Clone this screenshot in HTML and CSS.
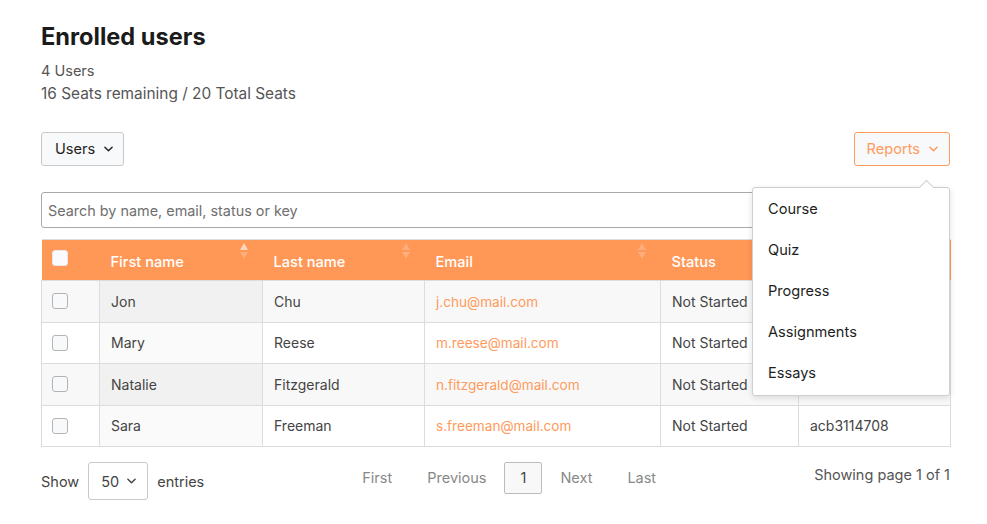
FILE: index.html
```html
<!DOCTYPE html>
<html lang="en">
<head>
<meta charset="utf-8">
<title>Enrolled users</title>
<link rel="stylesheet" href="styles.css">
</head>
<body>
<main class="page">
  <h1 class="title">Enrolled users</h1>
  <p class="meta">4 Users</p>
  <p class="meta meta-seats">16 Seats remaining / 20 Total Seats</p>

  <div class="toolbar">
    <button class="btn btn-users">Users <svg class="chev" viewBox="0 0 10 6"><path d="M1 1l4 4 4-4"/></svg></button>
    <div class="reports">
      <button class="btn btn-orange">Reports <svg class="chev" viewBox="0 0 10 6"><path d="M1 1l4 4 4-4"/></svg></button>
      <div class="menu">
        <span class="menu-arrow"></span>
        <div class="menu-item">Course</div>
        <div class="menu-item">Quiz</div>
        <div class="menu-item">Progress</div>
        <div class="menu-item">Assignments</div>
        <div class="menu-item">Essays</div>
      </div>
    </div>
  </div>

  <div class="search"><span class="placeholder">Search by name, email, status or key</span></div>

  <table class="grid">
    <colgroup>
      <col class="c-cb"><col class="c-first"><col class="c-last"><col class="c-email"><col class="c-status"><col class="c-key">
    </colgroup>
    <thead>
      <tr>
        <th><span class="cb cb-head"></span></th>
        <th>First name<span class="sort sort-up"></span></th>
        <th>Last name<span class="sort"></span></th>
        <th>Email<span class="sort"></span></th>
        <th>Status</th>
        <th></th>
      </tr>
    </thead>
    <tbody>
      <tr class="odd"><td><span class="cb"></span></td><td class="sorted">Jon</td><td>Chu</td><td><a class="mail">j.chu@mail.com</a></td><td>Not Started</td><td></td></tr>
      <tr><td><span class="cb"></span></td><td class="sorted">Mary</td><td>Reese</td><td><a class="mail">m.reese@mail.com</a></td><td>Not Started</td><td></td></tr>
      <tr class="odd"><td><span class="cb"></span></td><td class="sorted">Natalie</td><td>Fitzgerald</td><td><a class="mail">n.fitzgerald@mail.com</a></td><td>Not Started</td><td></td></tr>
      <tr><td><span class="cb"></span></td><td class="sorted">Sara</td><td>Freeman</td><td><a class="mail">s.freeman@mail.com</a></td><td>Not Started</td><td>acb3114708</td></tr>
    </tbody>
  </table>

  <div class="footer">
    <div class="show">
      <span>Show</span>
      <span class="select">50 <svg class="chev" viewBox="0 0 10 6"><path d="M1 1l4 4 4-4"/></svg></span>
      <span>entries</span>
    </div>
    <nav class="pager">
      <span class="pg">First</span>
      <span class="pg">Previous</span>
      <span class="pg-current">1</span>
      <span class="pg">Next</span>
      <span class="pg">Last</span>
    </nav>
    <div class="showing">Showing page 1 of 1</div>
  </div>
</main>
</body>
</html>
```
FILE: styles.css
```css
* { box-sizing: border-box; }
html, body { margin: 0; padding: 0; background: #fff; }
body {
  font-family: Inter, "Noto Sans", "Liberation Sans", sans-serif;
  color: #222;
}
.page {
  width: 909px;
  margin-left: 41px;
  padding-top: 21px;
}
.title {
  margin: 0;
  font-size: 23.6px;
  line-height: 32px;
  font-weight: 700;
  color: #1b1b1b;
}
.meta {
  margin: 8px 0 0;
  font-size: 14.5px;
  line-height: 20px;
  color: #555;
}
.meta-seats { margin-top: 2px; font-size: 15.4px; line-height: 22px; }

.toolbar {
  display: flex;
  justify-content: space-between;
  align-items: flex-start;
  margin-top: 27px;
}
.btn {
  display: inline-flex;
  align-items: center;
  height: 34px;
  font-family: inherit;
  font-size: 14.6px;
  color: #222;
  background: #f8f9fa;
  border: 1px solid #c9c9c9;
  border-radius: 3px;
}
.btn-users { gap: 9px; padding: 0 10px 0 13px; }
.btn-orange {
  gap: 9px;
  padding: 0 11px 0 12px;
  color: #ff9a5c;
  border-color: #ff9a5c;
}
.chev {
  width: 9px;
  height: 6px;
  fill: none;
  stroke: currentColor;
  stroke-width: 1.6;
  stroke-linecap: round;
  stroke-linejoin: round;
}
.reports { position: relative; }
.menu {
  position: absolute;
  top: 55px;
  right: 0;
  width: 198px;
  padding: 1px 0;
  background: #fff;
  border: 1px solid #cfcfcf;
  border-radius: 3px;
  box-shadow: 0 2px 6px rgba(0,0,0,0.12);
  z-index: 5;
}
.menu-arrow {
  position: absolute;
  top: -6px;
  right: 17px;
  width: 11px;
  height: 11px;
  background: #fff;
  border-top: 1px solid #cfcfcf;
  border-left: 1px solid #cfcfcf;
  transform: rotate(45deg);
}
.menu-item {
  height: 41px;
  line-height: 41px;
  padding-left: 15px;
  font-size: 14.6px;
  color: #1e1e1e;
}

.search {
  margin-top: 26px;
  height: 36px;
  border: 1px solid #a9a9a9;
  border-radius: 3px;
  padding-left: 6px;
  display: flex;
  align-items: center;
}
.placeholder { font-size: 14.4px; color: #6f6f6f; }

.grid {
  margin-top: 11px;
  width: 909px;
  border-collapse: collapse;
  table-layout: fixed;
  font-size: 14px;
  border-top: 1px solid #ddd;
}
.c-cb { width: 58px; }
.c-first { width: 163px; }
.c-last { width: 162px; }
.c-email { width: 236px; }
.c-status { width: 138px; }
.c-key { width: 152px; }
.grid th {
  position: relative;
  height: 41px;
  padding: 3px 11px 0;
  text-align: left;
  font-size: 14.6px;
  font-weight: 500;
  color: #fff;
  background: #ff9857;
}
.grid td {
  height: 41.5px;
  padding: 0 11px;
  color: #444;
  border: 1px solid #dcdcdc;
  white-space: nowrap;
  overflow: hidden;
}
.grid tr.odd td { background: #f8f8f8; }
.grid tr.odd td.sorted { background: #f1f1f1; }
.grid tr td.sorted { background: #fafafa; }
.grid td:first-child, .grid th:first-child { padding-left: 10px; }
.mail { color: #ff9a5c; text-decoration: none; font-size: 13.6px; }
.cb {
  display: block;
  width: 16px;
  height: 16px;
  border: 1px solid #b4b4b4;
  border-radius: 3px;
  background: #f8f9fa;
}
.cb-head { margin-top: -8px; border-color: #e8e8e8; background: #fbfbfd; }
.sort {
  position: absolute;
  top: 3px;
  right: 15px;
  width: 8px;
  height: 16px;
}
.sort::before, .sort::after {
  content: "";
  position: absolute;
  left: 0;
  border-left: 4px solid transparent;
  border-right: 4px solid transparent;
}
.sort::before { top: 0; border-bottom: 7px solid rgba(255,255,255,0.22); }
.sort::after { bottom: 0; border-top: 7px solid rgba(255,255,255,0.22); }
.sort-up::before { border-bottom-color: rgba(255,255,255,0.6); }

.footer {
  margin-top: 15px;
  display: flex;
  justify-content: space-between;
  align-items: flex-start;
  font-size: 14.5px;
}
.show {
  display: flex;
  align-items: center;
  gap: 9px;
  color: #444;
}
.show .select {
  display: inline-flex;
  align-items: center;
  gap: 8px;
  height: 38px;
  width: 60px;
  padding-left: 12px;
  border: 1px solid #c9c9c9;
  border-radius: 3px;
  color: #444;
}
.pager {
  display: flex;
  align-items: center;
  gap: 1px;
  height: 32px;
  color: #888;
}
.pg { padding: 0 17px; line-height: 32px; }
.pg-current {
  height: 32px;
  line-height: 30px;
  padding: 0 15px;
  color: #444;
  background: #f8f8f8;
  border: 1px solid #bcbcbc;
  border-radius: 2px;
}
.showing { line-height: 26px; color: #555; }
```
